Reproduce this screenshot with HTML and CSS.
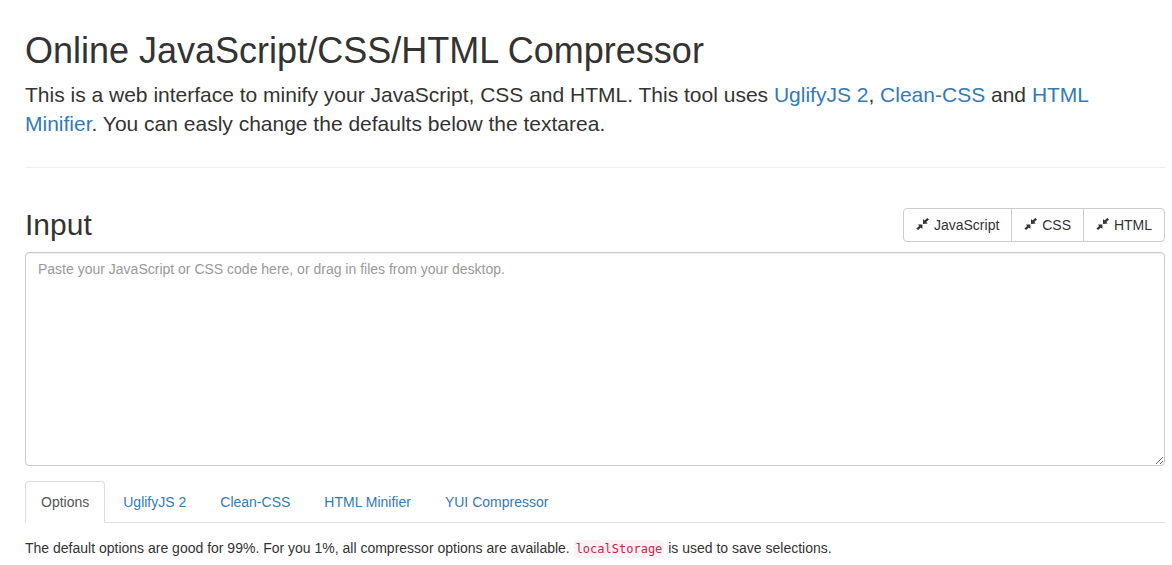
FILE: index.html
```html
<!DOCTYPE html>
<html lang="en">
<head>
    <meta charset="UTF-8">
    <meta name="viewport" content="width=device-width, initial-scale=1.0">
    <title>Online JavaScript/CSS/HTML Compressor</title>
    <link rel="stylesheet" href="styles.css">
</head>
<body>
    <div class="container">
        <header class="page-header">
            <h1>Online JavaScript/CSS/HTML Compressor</h1>
            <p class="lead">This is a web interface to minify your JavaScript, CSS and HTML. This tool uses <a href="#">UglifyJS 2</a>, <a href="#">Clean-CSS</a> and <a href="#">HTML Minifier</a>. You can easly change the defaults below the textarea.</p>
        </header>

        <div class="input-header">
            <h2><label for="input">Input</label></h2>
            <div class="btn-group">
                <button type="button" class="btn"><svg class="icon" viewBox="0 0 14 14"><path d="M7 7V2L8.500 3.500L11.300 0.900L13 2.400L10.200 5L11.800 6.600ZM6.400 7.400V12L4.900 10.600L2.100 13.100L0.400 11.600L3.200 9L1.800 7.400Z"/></svg> JavaScript</button>
                <button type="button" class="btn"><svg class="icon" viewBox="0 0 14 14"><path d="M7 7V2L8.500 3.500L11.300 0.900L13 2.400L10.200 5L11.800 6.600ZM6.400 7.400V12L4.900 10.600L2.100 13.100L0.400 11.600L3.200 9L1.800 7.400Z"/></svg> CSS</button>
                <button type="button" class="btn"><svg class="icon" viewBox="0 0 14 14"><path d="M7 7V2L8.500 3.500L11.300 0.900L13 2.400L10.200 5L11.800 6.600ZM6.400 7.400V12L4.900 10.600L2.100 13.100L0.400 11.600L3.200 9L1.800 7.400Z"/></svg> HTML</button>
            </div>
        </div>
        <textarea id="input" class="form-control" placeholder="Paste your JavaScript or CSS code here, or drag in files from your desktop."></textarea>

        <nav class="nav-tabs">
            <a href="#options" class="active">Options</a>
            <a href="#uglify">UglifyJS 2</a>
            <a href="#cleancss">Clean-CSS</a>
            <a href="#htmlminifier">HTML Minifier</a>
            <a href="#yui">YUI Compressor</a>
        </nav>
        <p class="tab-content" id="options">The default options are good for 99%. For you 1%, all compressor options are available. <code>localStorage</code> is used to save selections.</p>
    </div>
</body>
</html>
```
FILE: styles.css
```css
* {
    box-sizing: border-box;
}
body {
    margin: 0;
    font-family: "Helvetica Neue", Helvetica, Arial, "Liberation Sans", sans-serif;
    font-size: 14px;
    line-height: 20px;
    color: #333;
    background-color: #fff;
}
a {
    color: #337ab7;
    text-decoration: none;
}
h1, h2 {
    margin: 0;
    font-weight: normal;
}
.container {
    padding: 31px 7px 0 25px;
}
.page-header {
    padding-bottom: 29px;
    border-bottom: 1px solid #eee;
}
h1 {
    margin-bottom: 9px;
    font-size: 36px;
    line-height: 40px;
}
.lead {
    margin: 0;
    font-size: 21px;
    line-height: 29px;
}
.input-header {
    display: flex;
    justify-content: space-between;
    align-items: center;
    margin: 40px 0 10px;
}
h2 {
    font-size: 30px;
    line-height: 34px;
}
.btn-group {
    display: flex;
}
.btn {
    padding: 6px 12px;
    font: inherit;
    color: #333;
    background-color: #fff;
    border: 1px solid #ccc;
    cursor: pointer;
}
.btn + .btn {
    margin-left: -1px;
}
.btn:first-child {
    border-radius: 4px 0 0 4px;
}
.btn:last-child {
    border-radius: 0 4px 4px 0;
}
.btn:hover {
    background-color: #e6e6e6;
}
.icon {
    width: 14px;
    height: 14px;
    vertical-align: -1px;
    fill: #333;
}
.form-control {
    display: block;
    width: 100%;
    height: 214px;
    padding: 6px 12px;
    font: inherit;
    color: #555;
    border: 1px solid #ccc;
    border-radius: 4px;
    box-shadow: inset 0 1px 1px rgba(0, 0, 0, 0.075);
    resize: vertical;
}
.form-control::placeholder {
    color: #999;
}
.nav-tabs {
    display: flex;
    gap: 2px;
    margin-top: 15px;
    border-bottom: 1px solid #ddd;
}
.nav-tabs a {
    margin-bottom: -1px;
    padding: 10px 15px;
    border: 1px solid transparent;
    border-radius: 4px 4px 0 0;
}
.nav-tabs .active {
    color: #555;
    background-color: #fff;
    border-color: #ddd;
    border-bottom-color: transparent;
}
.tab-content {
    margin: 15px 0 10px;
}
code {
    padding: 2px;
    font-family: "DejaVu Sans Mono", monospace;
    font-size: 12px;
    color: #c7254e;
    background-color: #f9f2f4;
    border-radius: 4px;
}
```
